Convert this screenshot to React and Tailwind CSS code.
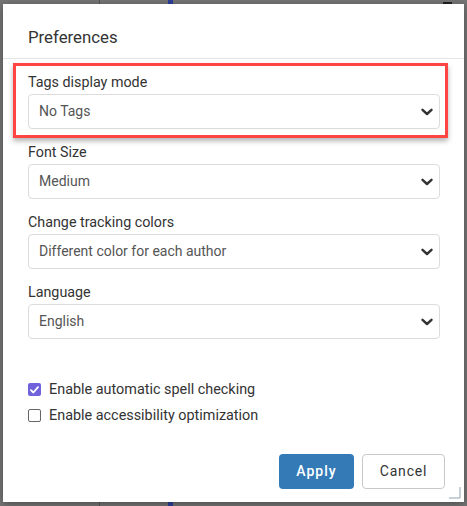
import React from "react";

const Chevron = () => (
  <svg width="12" height="8" viewBox="0 0 12 8" className="shrink-0">
    <path d="M1.5 1.8 L6 6 L10.5 1.8" fill="none" stroke="#333" strokeWidth="2.4" strokeLinecap="round" strokeLinejoin="round" />
  </svg>
);

const Select = ({ value }) => (
  <div className="flex items-center justify-between h-[35px] w-[412px] rounded-[4px] border border-[#dcdcdc] bg-white pl-[10px] pr-[6px]">
    <span className="text-[14px] text-[#555]">{value}</span>
    <Chevron />
  </div>
);

const Field = ({ label, value, className = "" }) => (
  <div className={"flex flex-col " + className}>
    <div className="h-[20px] leading-[20px] text-[14.3px] text-[#333] mb-[2px]">{label}</div>
    <Select value={value} />
  </div>
);

export default function App() {
  return (
    <div
      className="relative w-[467px] h-[506px] bg-[#757575] overflow-hidden pt-[4px] pl-[3px]"
      style={{ fontFamily: "Roboto, 'Liberation Sans', sans-serif" }}
    >
      <span className="absolute left-[99px] top-0 w-[1px] h-[4px] bg-[#555]" />
      <span className="absolute left-[168px] top-0 w-[5px] h-[4px] bg-[#2d3f9a]" />
      <span className="absolute left-[443px] top-[2px] w-[9px] h-[2px] bg-[#222]" />
      <span className="absolute left-[168px] bottom-0 w-[5px] h-[4px] bg-[#2d3f9a]" />
      <span className="absolute left-[99px] bottom-0 w-[1px] h-[4px] bg-[#555]" />

      <div className="relative w-[461px] h-[498px] bg-white shadow-[0_2px_8px_rgba(0,0,0,0.35)] flex flex-col">
        <div className="h-[55px] shrink-0 border-b border-[#e5e5e5] flex items-center pl-[25px] pt-[14px]">
          <span className="text-[16.8px] text-[#333]">Preferences</span>
        </div>

        <div className="flex flex-col pl-[10px] pt-[4px]">
          <div className="w-[435px] border-[3px] border-[#ff4444] shadow-[0_3px_5px_rgba(0,0,0,0.3)] pl-[12px] pt-[6px] pb-[6px]">
            <Field label="Tags display mode" value="No Tags" />
          </div>
          <div className="pl-[15px] pt-[4px] flex flex-col">
            <Field label="Font Size" value="Medium" />
            <Field label="Change tracking colors" value="Different color for each author" className="mt-[13px]" />
            <Field label="Language" value="English" className="mt-[13px]" />

            <div className="mt-[44px] flex flex-col gap-[13px]">
              <div className="flex items-center h-[13px]">
                <span className="w-[13px] h-[13px] rounded-[2px] bg-[#6f62dc] flex items-center justify-center">
                  <svg width="9" height="8" viewBox="0 0 9 8">
                    <path d="M1 4.2 L3.4 6.5 L8 1.2" fill="none" stroke="white" strokeWidth="1.8" strokeLinecap="round" strokeLinejoin="round" />
                  </svg>
                </span>
                <span className="ml-[8px] text-[14.4px] text-[#333]">Enable automatic spell checking</span>
              </div>
              <div className="flex items-center h-[13px]">
                <span className="w-[13px] h-[13px] rounded-[2px] border border-[#666] bg-white" />
                <span className="ml-[8px] text-[14.4px] text-[#333]">Enable accessibility optimization</span>
              </div>
            </div>
          </div>
        </div>

        <div className="flex justify-end gap-[8px] pr-[19px] mt-[32px]">
          <button className="w-[75px] h-[35px] rounded-[4px] bg-[#337ab7] text-white text-[14px] font-medium tracking-[1px]">Apply</button>
          <button className="w-[83px] h-[35px] rounded-[4px] border border-[#c8c8c8] bg-white text-[#333] text-[14px] tracking-[0.8px]">Cancel</button>
        </div>

        <svg className="absolute right-[3px] bottom-[3px]" width="12" height="12" viewBox="0 0 12 12">
          <path d="M11 0 V11 H0" fill="none" stroke="#8fa3b3" strokeWidth="1" />
        </svg>
      </div>
    </div>
  );
}
